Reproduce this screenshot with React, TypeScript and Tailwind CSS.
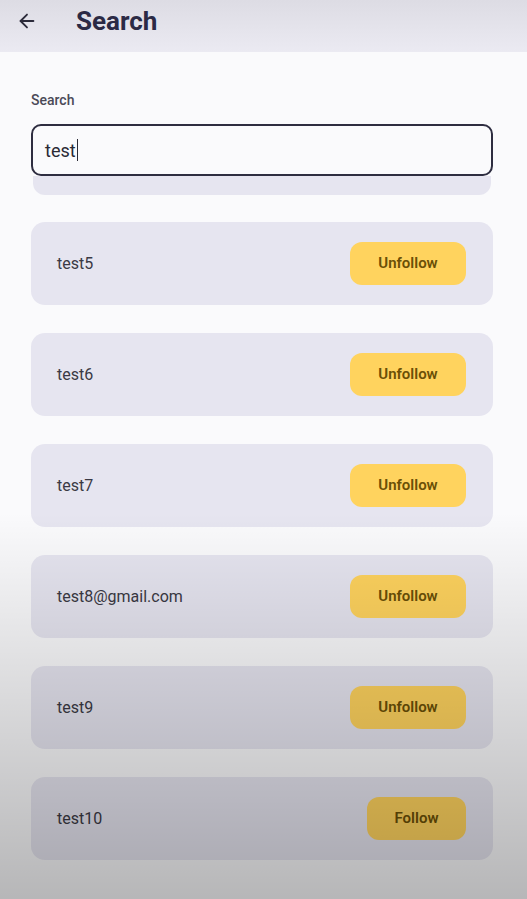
import { ArrowLeft } from 'lucide-react'

const users = [
    { name: 'test5', following: true },
    { name: 'test6', following: true },
    { name: 'test7', following: true },
    { name: 'test8@gmail.com', following: true },
    { name: 'test9', following: true },
    { name: 'test10', following: false },
]

const UserRow = ({ name, following }: { name: string; following: boolean }) => (
    <div className="flex h-[83px] items-center justify-between rounded-[14px] bg-[#e6e5f0] pl-[26px] pr-[27px]">
        <span className="text-[16px] text-[#3a3944]">{name}</span>
        <button
            className={`flex h-[43px] items-center justify-center rounded-[12px] bg-[#ffd35e] text-[15px] font-semibold text-[#6a4f06] ${
                following ? 'w-[116px]' : 'w-[99px]'
            }`}
        >
            {following ? 'Unfollow' : 'Follow'}
        </button>
    </div>
)

export default function App() {
    return (
        <div className="relative h-[899px] w-[527px] overflow-hidden bg-[#fafafc] font-['Roboto',sans-serif]">
            <header className="flex h-[52px] items-start bg-gradient-to-b from-[#dddce4] to-[#ebeaf2] pl-[16px] pt-[2px]">
                <div className="flex h-[38px] items-center">
                    <ArrowLeft size={22} strokeWidth={2} className="text-[#2b2a3a]" />
                    <h1 className="ml-[38px] text-[26px] font-bold text-[#2b2a45]">Search</h1>
                </div>
            </header>

            <div className="pl-[31px] pr-[34px] pt-[38px]">
                <label className="block text-[14px] font-medium text-[#4a4957]">Search</label>
                <div className="mt-[13px] flex h-[52px] items-center rounded-[10px] border-2 border-[#2e2d40] bg-[#fafafc] pl-[12px]">
                    <span className="text-[18px] text-[#2a2a35]">test</span>
                    <span className="ml-[1px] h-[22px] w-[1.5px] bg-[#2a2a35]" />
                </div>
                <div className="mx-[2px] h-[19px] rounded-b-[12px] bg-[#e6e5f0]" />

                <div className="mt-[27px] flex flex-col gap-[28px]">
                    {users.map((u) => (
                        <UserRow key={u.name} name={u.name} following={u.following} />
                    ))}
                </div>
            </div>

            <div className="pointer-events-none absolute inset-0 bg-gradient-to-b from-transparent via-transparent via-[57%] to-black/[0.27]" />
        </div>
    )
}
